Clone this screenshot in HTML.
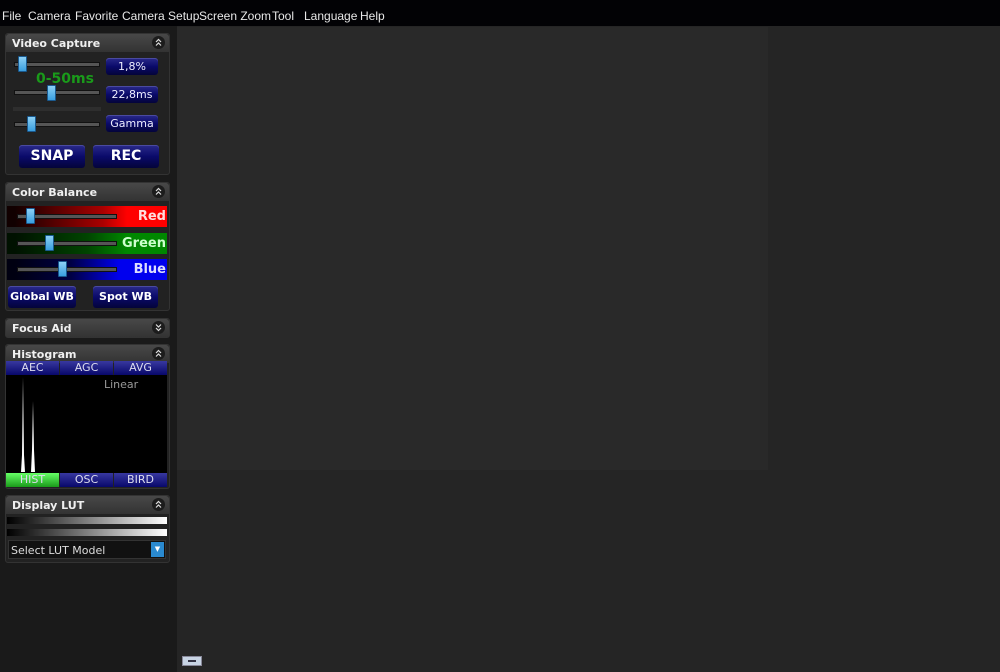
<!DOCTYPE html>
<html><head><style>
*{margin:0;padding:0;box-sizing:border-box}
body{width:1000px;height:672px;overflow:hidden;background:#252525;font-family:"DejaVu Sans","Liberation Sans",sans-serif;position:relative}
.a{position:absolute}
#menu{left:0;top:0;width:1000px;height:26px;background:#020205;color:#e8e8e8;font-size:12px;font-family:"Liberation Sans",sans-serif}
#menu span{position:absolute;top:9px}
#side{left:0;top:26px;width:177px;height:646px;background:#1a1a1a}
.panel{position:absolute;left:5px;width:165px;background:#222;border:1px solid #333;border-radius:3px}
.hd{height:18px;background:linear-gradient(#484848,#333);color:#f0f0f0;font-weight:bold;font-size:11px;padding:3px 0 0 6px;position:relative;border-radius:3px 3px 0 0}
.hd svg{position:absolute;right:4px;top:2px}
.trk{position:absolute;height:5px;background:#555;border:1px solid #111}
.th{position:absolute;width:9px;height:16px;background:linear-gradient(#8cd0f5,#3a9fe0);border:1px solid #1a5a90;border-radius:1px}
.bb{position:absolute;background:linear-gradient(#2a2a8a,#0a0a6a 50%,#04043a);border-radius:3px;color:#eef;text-align:center;font-size:11px;box-shadow:0 1px 0 #4a4aa0 inset}
.big{font-weight:bold;color:#fff;font-size:14px}
.cb{position:absolute;left:7px;width:160px;height:21px;font-weight:bold;font-size:13px;text-align:right;padding-right:1px;line-height:21px}
.hb{position:absolute;height:14px;background:linear-gradient(#3838a0,#08086a);color:#dde;font-size:11px;text-align:center;line-height:14px}
</style></head><body>
<div id="menu" class="a">
<span style="left:2px">File</span><span style="left:28px">Camera</span><span style="left:75px">Favorite</span><span style="left:122px">Camera Setup</span><span style="left:199px">Screen Zoom</span><span style="left:272px">Tool</span><span style="left:304px">Language</span><span style="left:360px">Help</span>
</div>
<div id="side" class="a"></div>
<div class="a" style="left:177px;top:27px;width:591px;height:443px;background:#292929"></div>

<svg width="0" height="0" style="position:absolute"><defs>
<g id="up"><circle cx="6.5" cy="6.5" r="6.5" fill="#1c1c1c"/><path d="M4 6 L6.5 3.5 L9 6 M4 9.5 L6.5 7 L9 9.5" stroke="#ddd" stroke-width="1.2" fill="none"/></g>
<g id="dn"><circle cx="6.5" cy="6.5" r="6.5" fill="#1c1c1c"/><path d="M4 3.5 L6.5 6 L9 3.5 M4 7 L6.5 9.5 L9 7" stroke="#ddd" stroke-width="1.2" fill="none"/></g>
</defs></svg>

<div class="panel" style="top:33px;height:142px">
<div class="hd">Video Capture<svg width="13" height="13"><use href="#up"/></svg></div>
<div class="trk" style="left:8px;top:28px;width:86px"></div><div class="th" style="left:12px;top:22px"></div>
<div class="bb" style="left:100px;top:24px;width:52px;height:17px;line-height:17px">1,8%</div>
<div class="a" style="left:30px;top:37px;color:#1a9a1a;font-weight:bold;font-size:14px">0-50ms</div>
<div class="trk" style="left:8px;top:56px;width:86px"></div><div class="th" style="left:41px;top:51px"></div>
<div class="bb" style="left:100px;top:52px;width:52px;height:17px;line-height:17px">22,8ms</div>
<div class="a" style="left:7px;top:73px;width:88px;height:4px;background:#2e2e2e"></div>
<div class="trk" style="left:8px;top:88px;width:86px"></div><div class="th" style="left:21px;top:82px"></div>
<div class="bb" style="left:100px;top:81px;width:52px;height:17px;line-height:17px">Gamma</div>
<div class="bb big" style="left:13px;top:111px;width:66px;height:23px;line-height:23px">SNAP</div>
<div class="bb big" style="left:87px;top:111px;width:66px;height:23px;line-height:23px">REC</div>
</div>

<div class="panel" style="top:182px;height:129px">
<div class="hd">Color Balance<svg width="13" height="13"><use href="#up"/></svg></div>
</div>
<div class="cb" style="top:206px;background:linear-gradient(90deg,#100 5%,#a00 60%,#f00 75%);color:#fdd">Red</div>
<div class="cb" style="top:233px;background:linear-gradient(90deg,#010 5%,#040 50%,#080 75%);color:#cfc">Green</div>
<div class="cb" style="top:259px;background:linear-gradient(90deg,#001 5%,#004 40%,#00e 70%);color:#ddf">Blue</div>
<div class="trk" style="left:17px;top:214px;width:100px"></div><div class="th" style="left:26px;top:208px"></div>
<div class="trk" style="left:17px;top:241px;width:100px"></div><div class="th" style="left:45px;top:235px"></div>
<div class="trk" style="left:17px;top:267px;width:100px"></div><div class="th" style="left:58px;top:261px"></div>
<div class="bb" style="left:8px;top:286px;width:68px;height:22px;line-height:22px;font-weight:bold;font-size:11px;color:#fff">Global WB</div>
<div class="bb" style="left:93px;top:286px;width:65px;height:22px;line-height:22px;font-weight:bold;font-size:11px;color:#fff">Spot WB</div>

<div class="panel" style="top:318px;height:20px"><div class="hd">Focus Aid<svg width="13" height="13"><use href="#dn"/></svg></div></div>

<div class="panel" style="top:344px;height:145px">
<div class="hd">Histogram<svg width="13" height="13"><use href="#up"/></svg></div>
</div>
<div class="hb" style="left:6px;top:361px;width:53px">AEC</div>
<div class="hb" style="left:60px;top:361px;width:53px">AGC</div>
<div class="hb" style="left:114px;top:361px;width:53px">AVG</div>
<div class="a" style="left:6px;top:375px;width:161px;height:98px;background:#000"></div>
<div class="a" style="left:104px;top:378px;color:#999;font-size:11px">Linear</div>
<svg class="a" style="left:6px;top:375px" width="40" height="98"><path d="M15 97 L16 80 L17 2 L18 80 L19 97Z M25 97 L26 75 L27 26 L28 75 L29 97Z" fill="#fff"/></svg>
<div class="hb" style="left:6px;top:473px;width:53px;background:linear-gradient(#6f6,#1a9a1a)">HIST</div>
<div class="hb" style="left:60px;top:473px;width:53px">OSC</div>
<div class="hb" style="left:114px;top:473px;width:53px">BIRD</div>

<div class="panel" style="top:495px;height:68px">
<div class="hd">Display LUT<svg width="13" height="13"><use href="#up"/></svg></div>
</div>
<div class="a" style="left:7px;top:517px;width:160px;height:7px;background:linear-gradient(90deg,#000,#fff)"></div>
<div class="a" style="left:7px;top:529px;width:160px;height:7px;background:linear-gradient(90deg,#000,#fff)"></div>
<div class="a" style="left:8px;top:540px;width:158px;height:19px;background:#111;border:1px solid #333;color:#ddd;font-size:11px;padding:3px 0 0 2px">Select LUT Model</div>
<div class="a" style="left:151px;top:542px;width:13px;height:15px;background:#2a8ad0;color:#fff;font-size:7px;text-align:center;line-height:15px">▼</div>

<div class="a" style="left:182px;top:656px;width:20px;height:10px;background:#c8d4e4;border:1px solid #889"><div style="margin:3px 5px;height:2px;background:#334"></div></div>
</body></html>
